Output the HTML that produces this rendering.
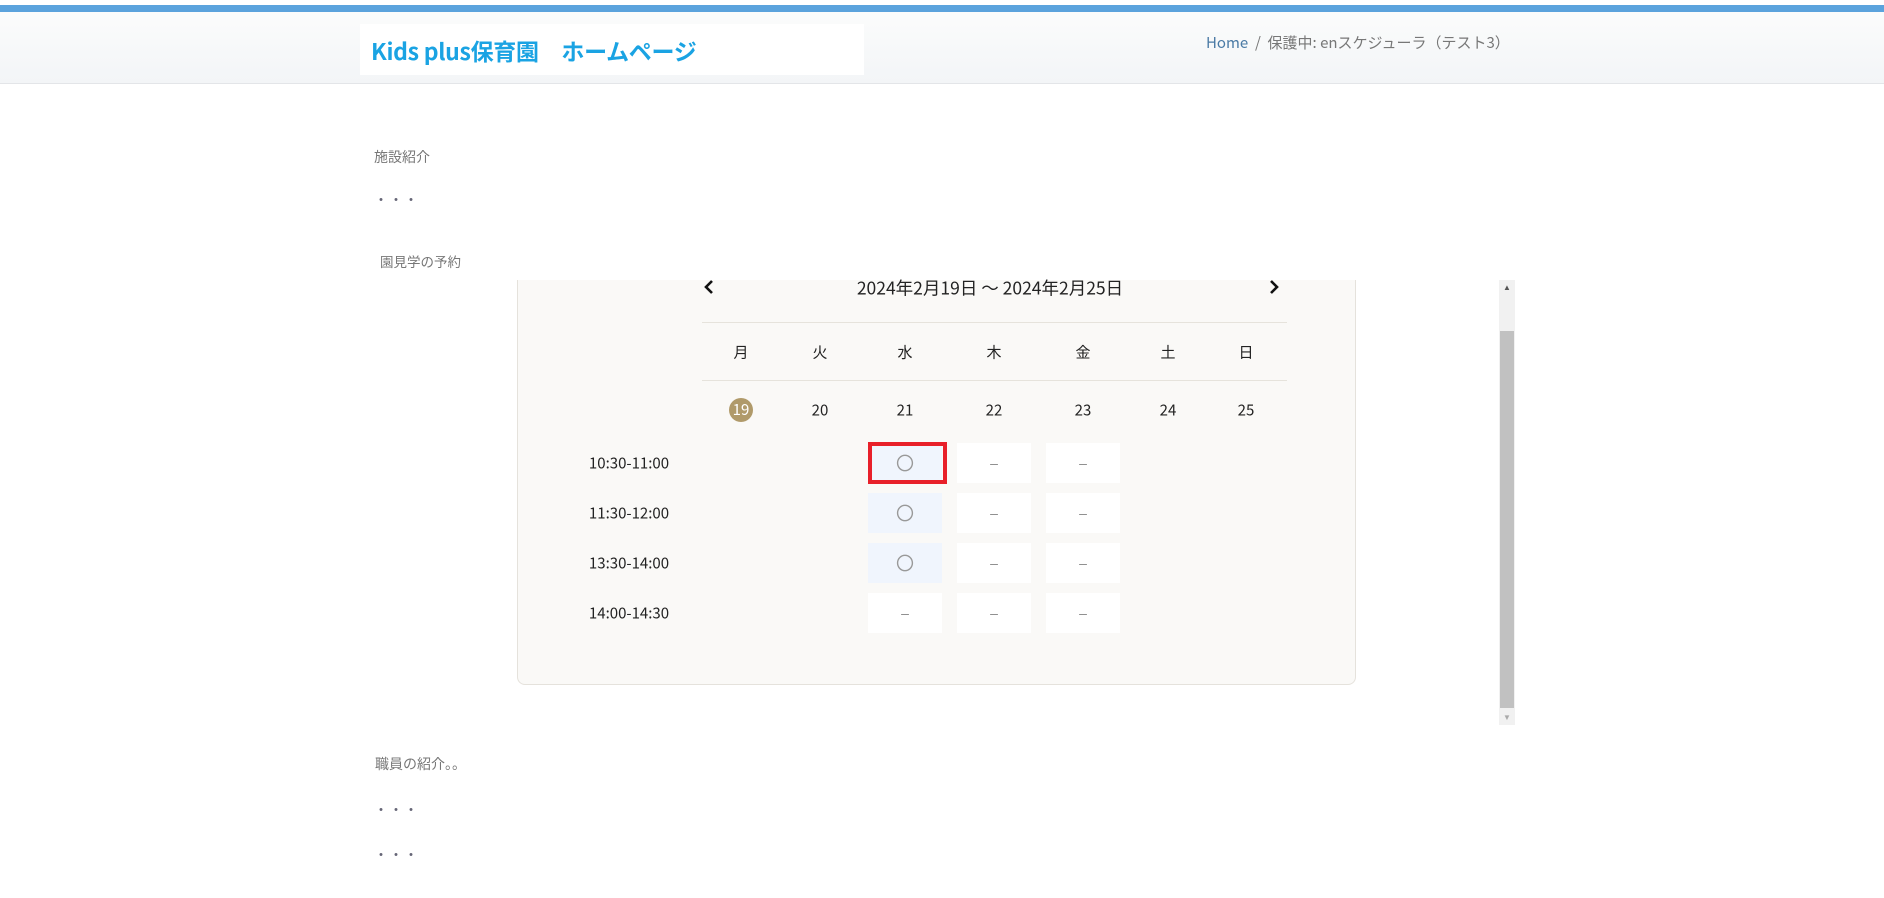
<!DOCTYPE html>
<html><head><meta charset="utf-8"><style>
*{margin:0;padding:0;box-sizing:border-box}
body{width:1884px;height:898px;background:#fff;position:relative;overflow:hidden;font-family:"Liberation Sans","Noto Sans CJK JP",sans-serif}
.a{position:absolute;white-space:nowrap}
.bar{left:0;top:5px;width:1884px;height:7px;background:#5ba3dd}
.hdr{left:0;top:12px;width:1884px;height:72px;background:linear-gradient(#fbfcfc,#f3f5f7);border-bottom:1px solid #e3e5e8}
.logo{left:360px;top:24px;width:504px;height:51px;background:#fff}
.logotxt{left:371px;top:33px;font-size:23px;font-weight:bold;color:#1aa3e3;line-height:34px;letter-spacing:-0.3px;font-family:"Noto Sans CJK JP",sans-serif}
.bc{left:1206px;top:32px;font-size:15px;color:#777;line-height:22px;font-family:"Noto Sans CJK JP",sans-serif}
.bc span{color:#4a7aa5}
.t{font-size:14px;color:#777;line-height:20px;font-family:"Noto Sans CJK JP",sans-serif}
.dots{font-size:14px;color:#667;letter-spacing:1px}
.card{left:517px;top:260px;width:839px;height:425px;background:#faf9f7;border:1px solid #e5e2dc;border-radius:8px}
.clip{left:500px;top:240px;width:1000px;height:40px;background:#fff}
.c{position:absolute;text-align:center;transform:translate(-50%,-50%);font-family:"Noto Sans CJK JP",sans-serif;color:#222;white-space:nowrap}
.line{position:absolute;left:702px;width:585px;height:1px;background:#e6e3dc}
.cell{position:absolute;width:74px;height:40px;background:#fff;text-align:center;line-height:40px;color:#888;font-size:14px}
.o{font-size:18px;font-family:"Noto Sans CJK JP",sans-serif;color:#999}
.blue{background:#f0f5fd}
</style></head><body>
<div class="a bar"></div>
<div class="a hdr"></div>
<div class="a logo"></div>
<div class="a logotxt">Kids plus保育園　ホームページ</div>
<div class="a bc"><span>Home</span>&nbsp;&nbsp;/&nbsp;&nbsp;保護中: enスケジューラ（テスト3）</div>

<div class="a t" style="left:374px;top:147px">施設紹介</div>
<div class="a dots" style="left:374px;top:190px">・・・</div>
<div class="a t" style="left:380px;top:251px;font-size:13.5px">園見学の予約</div>

<div class="a card"></div>
<div class="a clip"></div>
<svg class="a" style="left:703px;top:279px" width="12" height="16" viewBox="0 0 12 16"><path d="M9 2 L3 8 L9 14" fill="none" stroke="#111" stroke-width="2.6"/></svg>
<svg class="a" style="left:1268px;top:279px" width="12" height="16" viewBox="0 0 12 16"><path d="M3 2 L9 8 L3 14" fill="none" stroke="#111" stroke-width="2.6"/></svg>
<div class="c" style="left:990px;top:288px;font-size:17.5px">2024年2月19日 ～ 2024年2月25日</div>
<div class="line" style="top:322px"></div>
<div class="line" style="top:380px"></div>
<div class="c" style="left:741px;top:352px;font-size:15px">月</div>
<div class="c" style="left:820px;top:352px;font-size:15px">火</div>
<div class="c" style="left:905px;top:352px;font-size:15px">水</div>
<div class="c" style="left:994px;top:352px;font-size:15px">木</div>
<div class="c" style="left:1083px;top:352px;font-size:15px">金</div>
<div class="c" style="left:1168px;top:352px;font-size:15px">土</div>
<div class="c" style="left:1246px;top:352px;font-size:15px">日</div>
<div class="c" style="left:741px;top:410px;width:24px;height:24px;border-radius:50%;background:#b09a6a;color:#fff;font-size:15px;line-height:24px">19</div>
<div class="c" style="left:820px;top:410px;font-size:15px">20</div>
<div class="c" style="left:905px;top:410px;font-size:15px">21</div>
<div class="c" style="left:994px;top:410px;font-size:15px">22</div>
<div class="c" style="left:1083px;top:410px;font-size:15px">23</div>
<div class="c" style="left:1168px;top:410px;font-size:15px">24</div>
<div class="c" style="left:1246px;top:410px;font-size:15px">25</div>

<div class="c" style="left:629px;top:463px;font-size:15px">10:30-11:00</div>
<div class="c" style="left:629px;top:513px;font-size:15px">11:30-12:00</div>
<div class="c" style="left:629px;top:563px;font-size:15px">13:30-14:00</div>
<div class="c" style="left:629px;top:613px;font-size:15px">14:00-14:30</div>

<div class="cell blue o" style="left:868px;top:443px">〇</div>
<div class="cell" style="left:957px;top:443px">–</div>
<div class="cell" style="left:1046px;top:443px">–</div>
<div class="cell blue o" style="left:868px;top:493px">〇</div>
<div class="cell" style="left:957px;top:493px">–</div>
<div class="cell" style="left:1046px;top:493px">–</div>
<div class="cell blue o" style="left:868px;top:543px">〇</div>
<div class="cell" style="left:957px;top:543px">–</div>
<div class="cell" style="left:1046px;top:543px">–</div>
<div class="cell" style="left:868px;top:593px">–</div>
<div class="cell" style="left:957px;top:593px">–</div>
<div class="cell" style="left:1046px;top:593px">–</div>
<div class="a" style="left:868px;top:442px;width:79px;height:42px;border:4px solid #e8202a"></div>

<div class="a" style="left:1499px;top:280px;width:16px;height:445px;background:#f1f1f1"></div>
<div class="a" style="left:1500px;top:331px;width:14px;height:377px;background:#c1c1c1"></div>
<div class="a" style="left:1503px;top:283px;font-size:8px;color:#555">▲</div>
<div class="a" style="left:1503px;top:713px;font-size:8px;color:#aaa">▼</div>

<div class="a t" style="left:375px;top:754px">職員の紹介。。</div>
<div class="a dots" style="left:374px;top:800px">・・・</div>
<div class="a dots" style="left:374px;top:845px">・・・</div>
</body></html>
